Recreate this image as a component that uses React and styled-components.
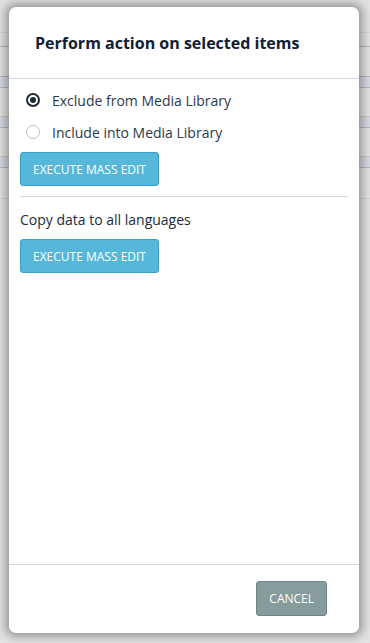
import React, { useState } from "react";
import styled, { createGlobalStyle } from "styled-components";

const GlobalStyle = createGlobalStyle`
  html, body {
    margin: 0;
    padding: 0;
    height: 100%;
  }
  body {
    font-family: "Open Sans", "Noto Sans", sans-serif;
    background: #e4e4e4;
    overflow: hidden;
  }
  #root {
    height: 100%;
  }
`;

const Page = styled.div`
  position: relative;
  height: 100vh;
  display: flex;
  flex-direction: column;
  background: #e2e2e2;
`;

const PageRow = styled.div`
  height: ${({ h }) => h}px;
  border-bottom: 1px solid ${({ line }) => line || "#c4c4c4"};
  background: ${({ bg }) => bg || "transparent"};
`;

const Overlay = styled.div`
  position: absolute;
  inset: 0;
  padding: 7px 11px 10px 9px;
  box-sizing: border-box;
  display: flex;
`;

const Modal = styled.div`
  flex: 1;
  display: flex;
  flex-direction: column;
  background: #fff;
  border-radius: 7px;
  box-shadow: 0 0 9px 4px rgba(0, 0, 0, 0.32);
  overflow: hidden;
`;

const Header = styled.div`
  padding: 27px 26px 25px;
  border-bottom: 1px solid #cfd6dc;
`;

const Title = styled.h2`
  margin: 0;
  font-size: 16px;
  line-height: 19px;
  font-weight: 700;
  color: #0f2035;
`;

const Body = styled.div`
  flex: 1;
  padding: 5px 11px 0;
  display: flex;
  flex-direction: column;
`;

const Section = styled.div`
  display: flex;
  flex-direction: column;
  align-items: flex-start;
  padding-bottom: 10px;
  border-bottom: ${({ last }) => (last ? "none" : "1px solid #d6d6d6")};
  margin-bottom: 10px;
`;

const RadioRow = styled.label`
  display: flex;
  align-items: center;
  gap: 12px;
  height: 32px;
  padding-left: 6px;
  font-size: 14px;
  color: #2b3a4b;
  cursor: pointer;
`;

const RadioCircle = styled.span`
  width: 14px;
  height: 14px;
  box-sizing: border-box;
  border-radius: 50%;
  border: ${({ checked }) =>
    checked ? "2px solid #1d2b3a" : "1.6px solid #b9bfc5"};
  display: flex;
  align-items: center;
  justify-content: center;

  &::after {
    content: "";
    width: 6px;
    height: 6px;
    border-radius: 50%;
    background: #1d2b3a;
    display: ${({ checked }) => (checked ? "block" : "none")};
  }
`;

const Label = styled.div`
  font-size: 14px;
  line-height: 19px;
  color: #1c2b3a;
  margin: 3px 0 10px;
`;

const PrimaryButton = styled.button`
  font-family: inherit;
  font-size: 12px;
  color: #fff;
  text-transform: uppercase;
  background: #55b8da;
  border: 1px solid #3aa1c6;
  border-radius: 3px;
  height: 34px;
  padding: 0 12px;
  margin-top: ${({ top }) => top || 0}px;
  cursor: pointer;
`;

const Footer = styled.div`
  display: flex;
  justify-content: flex-end;
  padding: 16px 32px 17px;
  border-top: 1px solid #cfd6dc;
`;

const CancelButton = styled.button`
  font-family: inherit;
  font-size: 12px;
  color: #fff;
  text-transform: uppercase;
  background: #869b9b;
  border: 1px solid #6f8383;
  border-radius: 3px;
  height: 35px;
  padding: 0 12px;
  cursor: pointer;
`;

const options = [
  { id: "exclude", label: "Exclude from Media Library" },
  { id: "include", label: "Include into Media Library" },
];

const App = () => {
  const [selected, setSelected] = useState("exclude");

  return (
    <>
      <GlobalStyle />
      <Page>
        <PageRow h={32} line="#d6d6d6" />
        <PageRow h={13} line="#b8b8b8" />
        <PageRow h={29} line="#b8b8b8" />
        <PageRow h={10} bg="#d6d9e2" line="#b8b8b8" />
        <PageRow h={28} line="#c9c9c9" />
        <PageRow h={10} bg="#d6d9e2" line="#b8b8b8" />
        <PageRow h={28} line="#c9c9c9" />
        <PageRow h={10} bg="#d6d9e2" line="#b8b8b8" />
        <PageRow h={30} bg="#e2e2e2" line="#d0d3dc" />
        <Overlay>
          <Modal>
            <Header>
              <Title>Perform action on selected items</Title>
            </Header>
            <Body>
              <Section>
                {options.map((o) => (
                  <RadioRow key={o.id} onClick={() => setSelected(o.id)}>
                    <RadioCircle checked={selected === o.id} />
                    {o.label}
                  </RadioRow>
                ))}
                <PrimaryButton top={4}>Execute mass edit</PrimaryButton>
              </Section>
              <Section last>
                <Label>Copy data to all languages</Label>
                <PrimaryButton>Execute mass edit</PrimaryButton>
              </Section>
            </Body>
            <Footer>
              <CancelButton>Cancel</CancelButton>
            </Footer>
          </Modal>
        </Overlay>
      </Page>
    </>
  );
};

export default App;
